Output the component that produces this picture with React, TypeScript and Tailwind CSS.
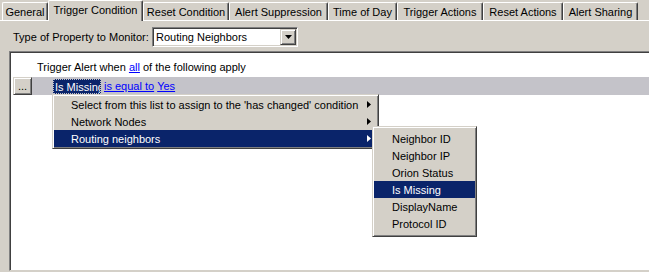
import React from "react";

const tabs = [
  { label: "General", w: "w-[46px]" },
  { label: "Trigger Condition", w: "w-[95px]", active: true },
  { label: "Reset Condition", w: "w-[86px]" },
  { label: "Alert Suppression", w: "w-[99px]" },
  { label: "Time of Day", w: "w-[69px]" },
  { label: "Trigger Actions", w: "w-[86px]" },
  { label: "Reset Actions", w: "w-[80px]" },
  { label: "Alert Sharing", w: "w-[75px]" },
];

const raised =
  "border border-t-[#d4d0c8] border-l-[#d4d0c8] border-r-[#404040] border-b-[#404040] shadow-[inset_1px_1px_0_#ffffff,inset_-1px_-1px_0_#808080]";

function Arrow({ white }: { white?: boolean }) {
  return (
    <svg width="4" height="7" viewBox="0 0 4 7" className="shrink-0">
      <polygon points="0,0 4,3.5 0,7" fill={white ? "#ffffff" : "#000000"} />
    </svg>
  );
}

function MenuItem({ text, active, sub, pl }: { text: string; active?: boolean; sub?: boolean; pl: string }) {
  return (
    <div
      className={`h-[17px] flex items-center justify-between whitespace-nowrap ${pl} pr-[6px] ${
        active ? "bg-[#0a246a] text-white" : "text-black"
      }`}
    >
      <span>{text}</span>
      {sub && <Arrow white={active} />}
    </div>
  );
}

export default function App() {
  return (
    <div className="relative w-[649px] h-[272px] overflow-hidden bg-[#d4d0c8] font-['Liberation_Sans',Arial,sans-serif] text-[11px] leading-[14px] text-black">
      {/* tab strip */}
      <div className="flex items-end h-[20px] pl-[2px]">
        {tabs.map((t) => (
          <div
            key={t.label}
            className={`${t.w} flex items-center justify-center rounded-t-[2px] border-l border-t border-r border-l-white border-t-white border-r-[#404040] shadow-[inset_-1px_0_0_#808080] whitespace-nowrap ${
              t.active ? "h-[21px] -mb-[1px] relative z-10 bg-[#d4d0c8] pb-[2px]" : "h-[18px]"
            }`}
          >
            {t.label}
          </div>
        ))}
      </div>

      {/* tab page */}
      <div className="border-t border-white">
        <div className="flex items-center mt-[6px] h-[20px]">
          <span className="w-[152px] pl-[13px] whitespace-nowrap">Type of Property to Monitor:</span>
          <div className="w-[146px] h-[20px] flex items-center justify-between bg-white border border-t-[#808080] border-l-[#808080] border-r-white border-b-white shadow-[inset_1px_1px_0_#404040,inset_-1px_-1px_0_#d4d0c8] pl-[3px] pr-[1px]">
            <span>Routing Neighbors</span>
            <div className={`w-[16px] h-[16px] bg-[#d4d0c8] flex items-center justify-center ${raised}`}>
              <svg width="7" height="4" viewBox="0 0 7 4">
                <polygon points="0,0 7,0 3.5,4" fill="#000" />
              </svg>
            </div>
          </div>
        </div>

        {/* condition panel */}
        <div className="ml-[9px] mt-[4px] w-[650px] h-[220px] bg-white border border-t-[#808080] border-l-[#808080] border-b-[#d4d0c8] border-r-[#d4d0c8] shadow-[inset_1px_1px_0_#404040]">
          <div className="mt-[8px] pl-[27px] whitespace-nowrap">
            Trigger Alert when{" "}
            <span className="text-[#0000ff] underline">all</span> of the following apply
          </div>
          <div className="mt-[3px] ml-[3px] h-[18px] flex items-center bg-[#c4c3c9]">
            <div className={`w-[19px] h-[18px] bg-[#d4d0c8] flex items-center justify-center leading-[10px] ${raised}`}>
              ...
            </div>
            <div className="ml-[21px] w-[48px] h-[15px] overflow-hidden whitespace-nowrap bg-[#0a246a] text-white pl-[1px] border border-dotted border-[#c4c3c9]">
              Is Missing
            </div>
            <span className="ml-[3px] text-[#0000ff] underline whitespace-nowrap">is equal to</span>
            <span className="ml-[3px] text-[#0000ff] underline">Yes</span>
          </div>
        </div>
      </div>

      {/* context menu */}
      <div className={`absolute left-[52px] top-[94px] w-[327px] bg-[#d4d0c8] p-[1px] ${raised}`}>
        <MenuItem pl="pl-[17px]" text="Select from this list to assign to the 'has changed' condition" sub />
        <MenuItem pl="pl-[17px]" text="Network Nodes" sub />
        <MenuItem pl="pl-[17px]" text="Routing neighbors" sub active />
      </div>

      {/* submenu */}
      <div className={`absolute left-[372px] top-[126px] w-[105px] bg-[#d4d0c8] px-[1px] pt-[3px] pb-[4px] ${raised}`}>
        <MenuItem pl="pl-[18px]" text="Neighbor ID" />
        <MenuItem pl="pl-[18px]" text="Neighbor IP" />
        <MenuItem pl="pl-[18px]" text="Orion Status" />
        <MenuItem pl="pl-[18px]" text="Is Missing" active />
        <MenuItem pl="pl-[18px]" text="DisplayName" />
        <MenuItem pl="pl-[18px]" text="Protocol ID" />
      </div>
    </div>
  );
}
